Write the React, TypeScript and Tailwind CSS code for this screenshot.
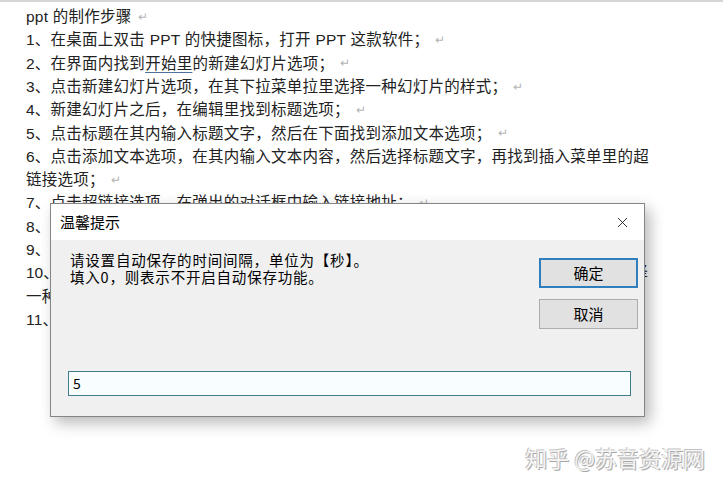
import { X } from "lucide-react";

const lines: { text: React.ReactNode; mark?: boolean; tight?: boolean }[] = [
  { text: "ppt 的制作步骤", mark: true },
  { text: "1、在桌面上双击 PPT 的快捷图标，打开 PPT 这款软件；", mark: true },
  {
    text: (
      <>
        2、在界面内找到
        <span className="underline decoration-[#4f6f9f] underline-offset-[3px]">开始里</span>
        的新建幻灯片选项；
      </>
    ),
    mark: true,
  },
  { text: "3、点击新建幻灯片选项，在其下拉菜单拉里选择一种幻灯片的样式；", mark: true },
  { text: "4、新建幻灯片之后，在编辑里找到标题选项；", mark: true },
  { text: "5、点击标题在其内输入标题文字，然后在下面找到添加文本选项；", mark: true },
  { text: "6、点击添加文本选项，在其内输入文本内容，然后选择标题文字，再找到插入菜单里的超" },
  { text: "链接选项；", mark: true },
  { text: "7、点击超链接选项，在弹出的对话框中输入链接地址；", mark: true },
  { text: "8、设置完成后点击确定，返回到编辑界面；", mark: true },
  { text: "9、在设计菜单里找到主题选项；", mark: true },
  { text: "10、在弹出的对话框中选择确定后返回，点击设计菜单里的主题选项，在其下拉列表里选择", tight: true },
  { text: "一种合适的主题样式；", mark: true },
  { text: "11、最后点击文件菜单里的保存选项即可。", mark: true },
];

const App = () => {
  return (
    <div className="relative w-[723px] h-[487px] overflow-hidden bg-white">
      {/* document */}
      <div className="border-t-2 border-[#d6d6d6] pl-[26px] pt-[3px] text-[15.5px] text-[#222] font-['Liberation_Sans','Noto_Sans_CJK_SC',sans-serif]">
        {lines.map((l, i) => (
          <div
            key={i}
            className={`flex h-[23.3px] items-center whitespace-nowrap ${l.tight ? "tracking-[0px]" : "tracking-[0.25px]"}`}
          >
            {l.text}
            {l.mark && <span className="ml-[6px] text-[12px] text-[#b5b5b5]">↵</span>}
          </div>
        ))}
      </div>

      {/* dialog window */}
      <div className="absolute left-[50px] top-[203px] flex h-[214px] w-[595px] flex-col border border-[#858585] bg-[#f0f0f0] shadow-[5px_6px_14px_rgba(0,0,0,0.28)] font-['Noto_Sans_CJK_SC',sans-serif]">
        <div className="flex h-[36px] items-center justify-between bg-white pl-[9px] pr-[13px]">
          <span className="text-[15px] text-black">温馨提示</span>
          <X className="h-[17px] w-[17px] text-[#111]" strokeWidth={1.2} />
        </div>
        <div className="flex flex-1 flex-col pl-[17px] pr-[6px] pt-[18px]">
          <div className="flex justify-between pl-[2px]">
            <div className="-mt-[7px] text-[14.5px] leading-[17px] tracking-[0.8px] text-black">
              <div>请设置自动保存的时间间隔，单位为【秒】。</div>
              <div>填入0，则表示不开启自动保存功能。</div>
            </div>
            <div className="flex flex-col gap-[11px]">
              <button className="h-[30px] w-[99px] border-2 border-[#2f7fbf] bg-[#e1e1e1] text-[15px] text-black">
                确定
              </button>
              <button className="h-[30px] w-[99px] border border-[#adadad] bg-[#e1e1e1] text-[15px] text-black">
                取消
              </button>
            </div>
          </div>
          <div className="mt-[42px] flex h-[25px] w-[563px] items-center border border-[#3f7c8c] bg-[#f8feff] pl-[4px] text-[14px] text-black">
            5
          </div>
        </div>
      </div>

      {/* watermark */}
      <div className="absolute right-[18px] top-[443px] text-[22px] leading-[28px] text-[#f4f4f4] font-['Noto_Sans_CJK_SC',sans-serif] [text-shadow:-1px_-1px_0_#c4c4c4,1px_1px_0_#a8a8a8]">
        知乎 @苏音资源网
      </div>
    </div>
  );
};

export default App;
